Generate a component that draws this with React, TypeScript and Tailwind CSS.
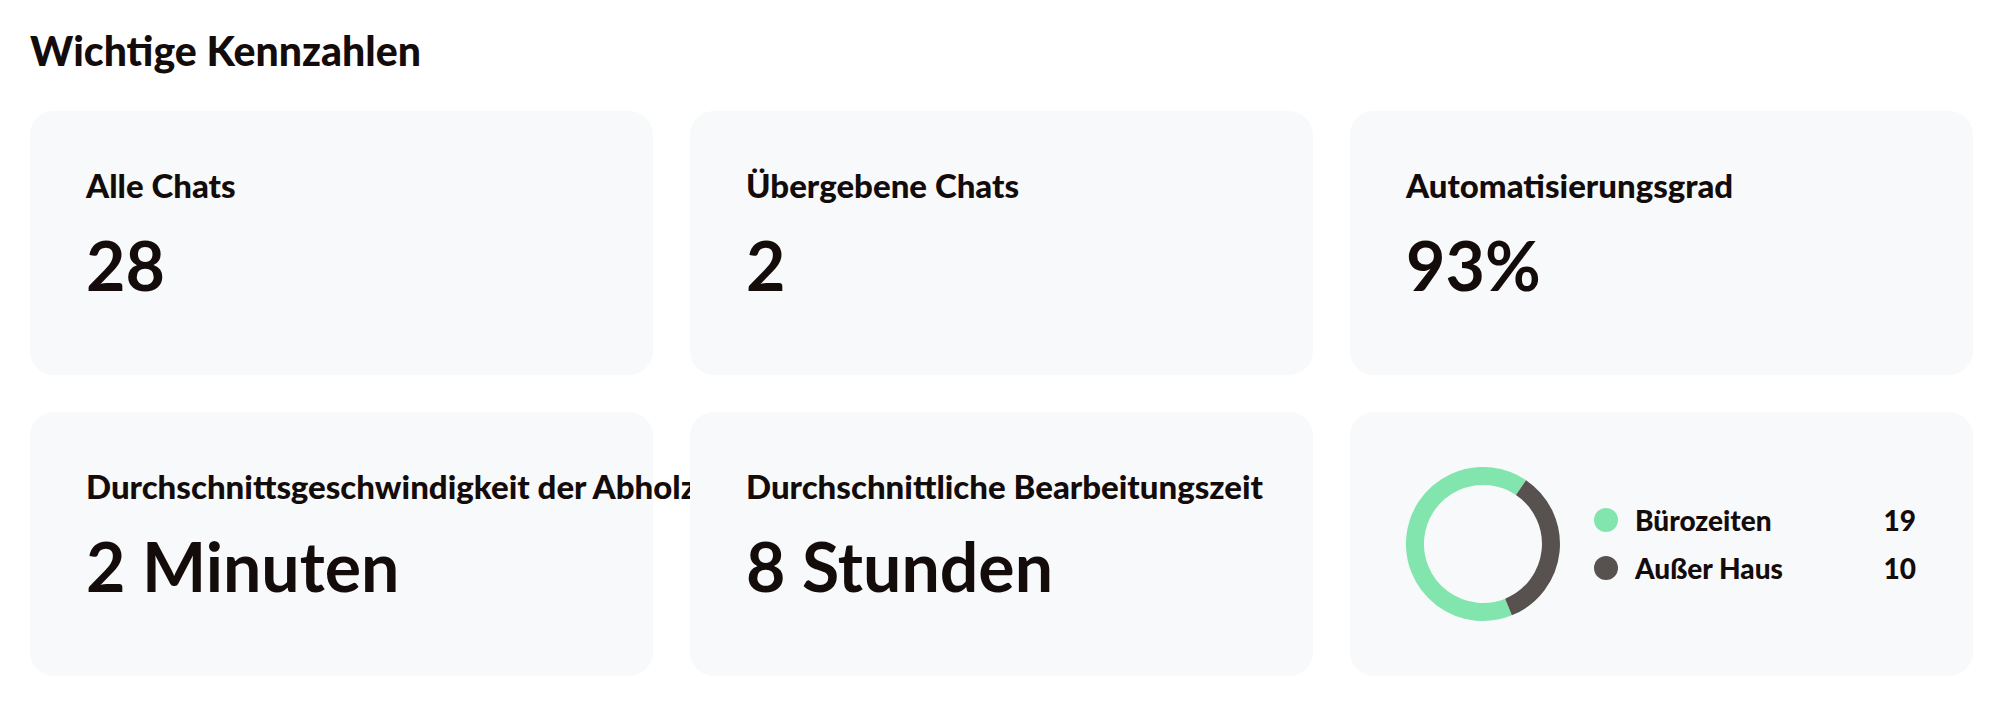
import React from 'react';

const stats = [
  { label: 'Alle Chats', value: '28' },
  { label: 'Übergebene Chats', value: '2' },
  { label: 'Automatisierungsgrad', value: '93%' },
  { label: 'Durchschnittsgeschwindigkeit der Abholzeit', value: '2 Minuten' },
  { label: 'Durchschnittliche Bearbeitungszeit', value: '8 Stunden' },
];

const legend = [
  { label: 'Bürozeiten', value: 19, dot: 'bg-[#82e5ae]' },
  { label: 'Außer Haus', value: 10, dot: 'bg-[#57524f]' },
];

function StatCard({ label, value }: { label: string; value: string }) {
  return (
    <div className="relative h-[264px] rounded-[24px] bg-[#f7f9fa] px-[56px] pt-[55px]">
      <p className="whitespace-nowrap text-[33px] font-black leading-[1.2]">{label}</p>
      <p className="mt-[18px] text-[68px] font-bold leading-[1.2]">{value}</p>
    </div>
  );
}

function Donut() {
  return (
    <svg width="154" height="154" viewBox="0 0 154 154" className="shrink-0">
      <path d="M 102.5 140.0 A 68 68 0 1 1 115.0 20.6" fill="none" stroke="#82e5ae" strokeWidth="18" />
      <path d="M 115.0 20.6 A 68 68 0 0 1 102.5 140.0" fill="none" stroke="#57524f" strokeWidth="18" />
    </svg>
  );
}

function ChannelCard() {
  return (
    <div className="relative flex h-[264px] items-center gap-[34px] rounded-[24px] bg-[#f7f9fa] pl-[56px] pr-[57px]">
      <Donut />
      <div className="flex flex-1 flex-col gap-[13px]">
        {legend.map((item) => (
          <div key={item.label} className="flex items-center text-[28px] font-black leading-[1.25]">
            <span className={`mr-[17px] h-[24px] w-[24px] rounded-full ${item.dot}`} />
            <span className="flex-1">{item.label}</span>
            <span>{item.value}</span>
          </div>
        ))}
      </div>
    </div>
  );
}

export default function App() {
  return (
    <div className="min-h-screen bg-white pl-[30px] pr-[39px] pt-[26px] text-[#140c0b] [font-family:Lato,'Noto_Sans',sans-serif]">
      <h2 className="mb-[36px] text-[41px] font-black leading-[1.2]">Wichtige Kennzahlen</h2>
      <div className="grid grid-cols-3 gap-[37px]">
        {stats.map((s) => (
          <StatCard key={s.label} label={s.label} value={s.value} />
        ))}
        <ChannelCard />
      </div>
    </div>
  );
}
